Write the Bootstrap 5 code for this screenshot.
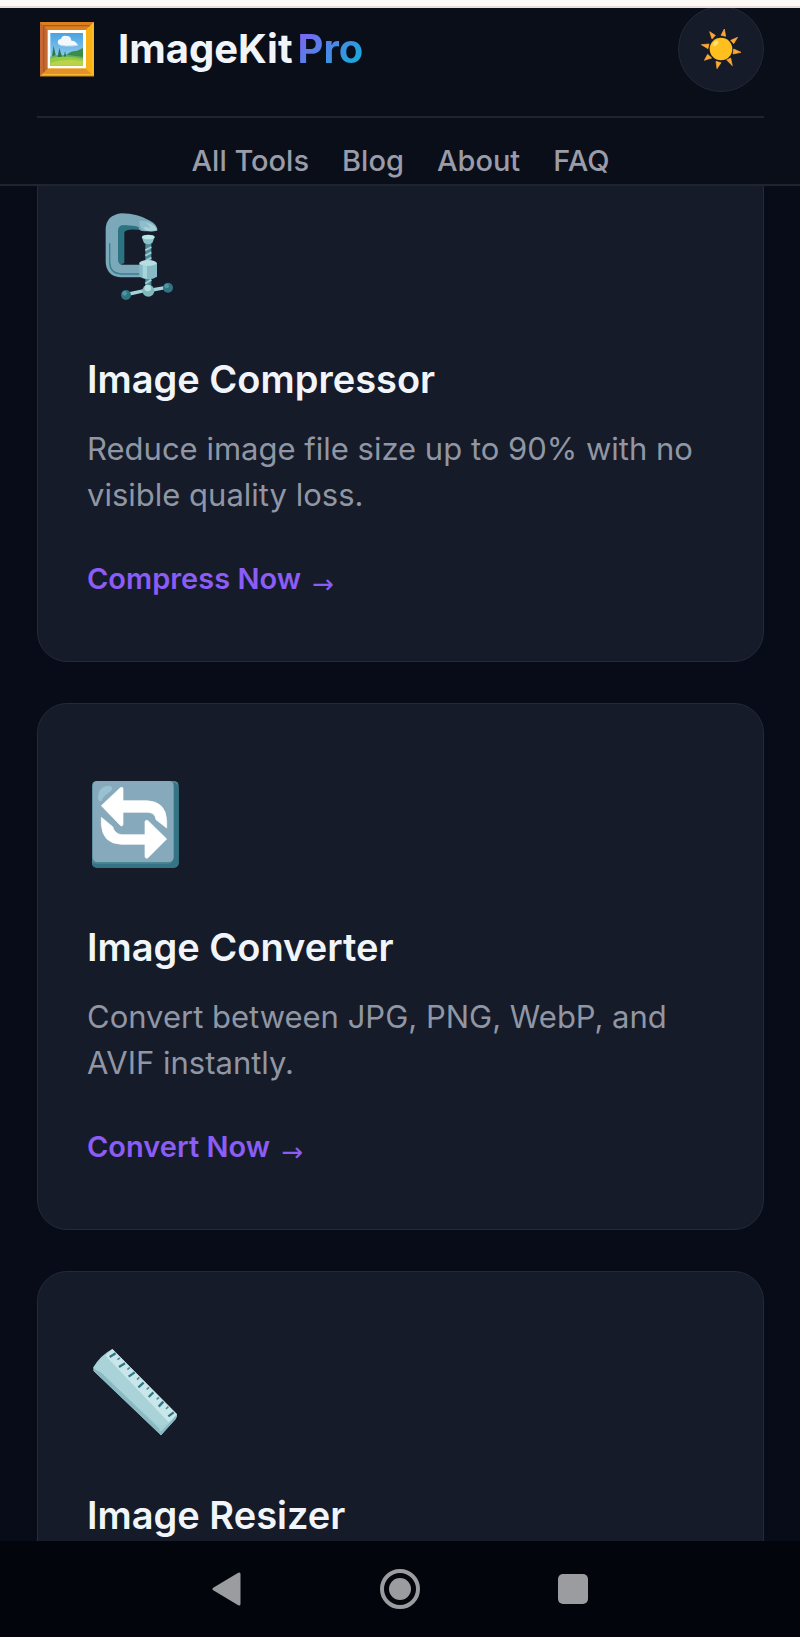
<!DOCTYPE html>
<html lang="en">
<head>
<meta charset="utf-8">
<meta name="viewport" content="width=device-width, initial-scale=1">
<title>ImageKit Pro</title>
<link href="https://cdn.jsdelivr.net/npm/bootstrap@5.3.0/dist/css/bootstrap.min.css" rel="stylesheet">
<style>
  body { background: #080c18; color: #f1f5f9; font-family: Inter, "Liberation Sans", sans-serif; }
  .screen { height: 100vh; }
  .status-strip { height: 8px; background: #fdf9f5; border-bottom: 2px solid #ecdcdd; z-index: 3; }
  .site-header { margin-top: -8px; padding-top: 6px; background: #0a0e19; border-bottom: 2px solid #1f2530; z-index: 2; }
  .gutter { padding-left: 37px; padding-right: 36px; }
  .brand-row { padding-bottom: 24px; border-bottom: 2px solid #1f2530; }
  .brand { gap: 21px; font-size: 40px; line-height: 48px; font-weight: 700; color: #f1f5f9; }
  .brand-pro { margin-left: 5px; background: linear-gradient(135deg, #8b5cf6, #06b6d4); -webkit-background-clip: text; background-clip: text; color: transparent; }
  .theme-toggle { width: 86px; height: 86px; background: #151b29; border: 1px solid #232938; }
  .site-nav { padding-top: 19px; gap: 33px; font-size: 29px; line-height: 47px; font-weight: 500; }
  .site-nav a { color: #9a9ca9; }
  .tools { gap: 41px; margin-top: -51px; }
  .tool { padding: 50px 49px 59px; background: #151b29; border: 1px solid #242a37; border-radius: 30px; }
  .tool-icon { height: 140px; margin-bottom: 28px; }
  .tool h2 { margin-bottom: 22px; font-size: 38px; line-height: 50px; font-weight: 600; }
  .tool p { margin-bottom: 38px; font-size: 31px; line-height: 46px; color: #9196a4; }
  .tool-link { font-size: 29px; line-height: 46px; font-weight: 600; color: #8b5cf6; }
  .arrow { margin-left: 4px; font-family: "DejaVu Sans", sans-serif; font-size: 26px; font-weight: 400; line-height: 1; vertical-align: -4px; }
  .system-bar { height: 96px; gap: 125px; background: #02050c; z-index: 2; }
  .system-bar button { width: 48px; height: 48px; color: #9b9c9f; }
</style>
</head>
<body>
<div class="screen d-flex flex-column overflow-hidden">
  <div class="status-strip position-relative flex-shrink-0"></div>
  <header class="site-header position-relative flex-shrink-0 gutter">
    <div class="brand-row d-flex align-items-center justify-content-between">
      <a href="#" class="brand d-flex align-items-center text-decoration-none">
        <svg width="60" height="60" viewBox="21 27 180 180" aria-hidden="true">
          <defs><linearGradient id="sky" x2="0" y2="1"><stop stop-color="#4aa3e0"/><stop offset="1" stop-color="#a5d9f2"/></linearGradient></defs>
          <path fill="#f4a51c" d="M30 36h162v163H30z"/>
          <path fill="#dc801f" d="M30 36h162l-25 24H54z"/>
          <path fill="#c56831" d="M30 36l24 24v116l-24 23z"/>
          <path fill="#e1922c" d="M30 199l24-23h114l24 23z"/>
          <path fill="#f9b116" d="M192 36v163l-24-23V60z"/>
          <path fill="none" stroke="#a85a2d" stroke-width="4" d="M41 187V47h139"/>
          <path fill="none" stroke="#ffc02b" stroke-width="3" d="M188 41v153H36"/>
          <path fill="#fff" d="M53 60h115v115H53z"/>
          <path fill="url(#sky)" d="M61 69h98v98H61z"/>
          <path fill="#67b258" d="M61 140q25-9 47-4l51-19v50H61z"/>
          <path fill="#3d8a4d" d="M109 135q14-13 30-12l20-9v27q-31-5-50-6z"/>
          <path fill="#94cb45" d="M61 145q42-12 98 2v20H61z"/>
          <path fill="#bad348" d="M61 158q52-15 98-4v13H61z"/>
          <path fill="#2b7548" d="M66 139l5-32 6 29zM83 141l5-27 8 26zM101 140l4-16 4 15z"/>
          <path fill="#f2f8fb" d="M85 103q-6-14 8-16 4-13 17-9 13-1 14 14 13-1 20 14-15 4-28 1-21 3-31-4z"/>
          <path fill="#c8dde8" d="M86 104q18 0 27 4 13-4 31-2-15 5-30 3-19 1-28-5z"/>
        </svg>
        <span>ImageKit<span class="brand-pro">Pro</span></span>
      </a>
      <button type="button" class="theme-toggle rounded-circle p-0 d-flex align-items-center justify-content-center" aria-label="Switch theme">
        <svg width="48" height="48" viewBox="78 75 144 144" aria-hidden="true">
          <g fill="#ffa733" stroke="#ffa733" stroke-width="2" stroke-linejoin="round">
            <path d="M160 87l4 22-14-3zM200 112l-12 19-9-10zM210 157l-24 5 2-15zM184 197l-17-17 12-6zM138 206l-3-22 15 4zM100 181l10-18 12 11zM91 134l23-2-3 14zM116 95l17 11-10 11z"/>
          </g>
          <circle cx="150" cy="147" r="34" fill="#ffbf1f"/>
          <ellipse cx="134" cy="130" rx="10" ry="6" fill="#ffe06c" transform="rotate(-45 134 130)"/>
        </svg>
      </button>
    </div>
    <nav class="site-nav d-flex justify-content-center">
      <a href="#" class="text-decoration-none">All Tools</a>
      <a href="#" class="text-decoration-none">Blog</a>
      <a href="#" class="text-decoration-none">About</a>
      <a href="#" class="text-decoration-none">FAQ</a>
    </nav>
  </header>

  <main class="flex-grow-1 gutter" style="min-height:0">
    <div class="tools d-flex flex-column">
      <article class="tool">
        <div class="tool-icon d-flex align-items-center">
          <svg width="96" height="96" viewBox="21 24 288 288" aria-hidden="true">
            <path fill="#2c7482" d="M112 76l77-2-2 17q-46-7-54 5v93l-21 8z"/>
            <path fill="#7ca9b9" d="M232 91q0-18-22-29Q174 41 125 40 78 45 77 88v99q3 42 44 45h60v-38h-52q-15 0-15-15V91q1-15 16-15 29-1 46 5 0 14 20 13z"/>
            <path fill="#9ccbd6" d="M178 63q42-5 53 28-22 8-41-1-13-7-12-27z" opacity=".6"/>
            <path fill="#b6dde3" d="M196 68q12 6 17 17-16-6-23-3 3 8 13 11 12 3 29-1-2-18-36-24z" opacity=".6"/>
            <path fill="none" stroke="#397f8e" stroke-width="4" stroke-linecap="round" d="M89 131v56q1 34 34 35h55"/>
            <path fill="#4e8996" d="M196 131h18v56h-18zM196 235h18v26h-18z"/>
            <path stroke="#9bcbd3" stroke-width="6" d="M196 151l18-10M196 167l18-10M196 183l18-10M196 251l18-12"/>
            <path fill="#8bc2c8" d="M185 111q19-11 39 0l-7 18q-12 8-25 0z"/>
            <ellipse cx="205" cy="111" rx="19" ry="7" fill="#b9e6e6"/>
            <path fill="#86bac5" d="M178 189q26-14 53 0v41q-24 15-53 0z"/>
            <path fill="#a5d4db" d="M188 195h13v41l-13-3z"/>
            <ellipse cx="204" cy="189" rx="26" ry="9" fill="#b7dce2"/>
            <path stroke="#a3d2d8" stroke-width="10" d="M147 282l46-10M216 270l39-7"/>
            <circle cx="205" cy="272" r="18" fill="#80b8bd"/>
            <circle cx="203" cy="264" r="10" fill="#b4dde0"/>
            <circle cx="138" cy="285" r="15" fill="#307381"/><circle cx="264" cy="263" r="15" fill="#307381"/>
            <circle cx="134" cy="280" r="7" fill="#4e96a3"/><circle cx="260" cy="258" r="7" fill="#4e96a3"/>
          </svg>
        </div>
        <h2>Image Compressor</h2>
        <p>Reduce image file size up to 90% with no visible quality loss.</p>
        <a href="#" class="tool-link d-block text-decoration-none">Compress Now <span class="arrow">→</span></a>
      </article>

      <article class="tool">
        <div class="tool-icon d-flex align-items-center">
          <svg width="96" height="96" viewBox="21 18 288 288" aria-hidden="true">
            <rect x="36" y="33" width="260" height="260" rx="14" fill="#4d8694"/>
            <path fill="#347484" d="M280 38q16 2 16 20v219q0 16-17 16H52q-16 0-16-14l16 2h210q18 0 18-18z"/>
            <rect x="38" y="33" width="243" height="243" rx="14" fill="#86aabb"/>
            <path fill="#a2cbdb" d="M54 86q0-39 35-39 18 6-4 22-18 12-20 24-8 4-11-7z" opacity=".7"/>
            <g fill="#fff" stroke="#fff" stroke-width="2" stroke-linejoin="round">
              <path d="M64 107l57-54q7-4 8 3v36h73q56 3 58 60v22l-32-25q-3-22-26-22h-73v36q-1 7-7 4z"/>
              <path d="M64 142l34 28q6 22 27 24h70v-39q2-7 9-3l56 55-56 56q-8 5-9-4v-36h-71q-57-2-60-60z"/>
            </g>
          </svg>
        </div>
        <h2>Image Converter</h2>
        <p>Convert between JPG, PNG, WebP, and AVIF instantly.</p>
        <a href="#" class="tool-link d-block text-decoration-none">Convert Now <span class="arrow">→</span></a>
      </article>

      <article class="tool">
        <div class="tool-icon d-flex align-items-center">
          <svg width="96" height="96" viewBox="21 27 288 288" aria-hidden="true">
            <path fill="#a5ced5" d="M40 97Q62 60 97 42l194 196q2 9-10 20l-38 43L41 108z"/>
            <path fill="#c9e7eb" d="M76 62l21-20 194 196-25 26z"/>
            <path fill="#a9d3d9" d="M76 62L40 97l24 20 166 150 20 6 16-11z"/>
            <path fill="#89b9c3" d="M40 100l25 14 180 174 46-48-4 13-44 48L41 108z"/>
            <path fill="#a4d0d4" d="M266 262l23-22-46 48-7-3z"/>
            <path stroke="#2e7887" stroke-width="7" d="M89 66l18-11M117 96l18-11M146 125l18-13M175 157l16-14M206 186l14-14M236 215l14-15M265 244l16-12"/>
            <path stroke="#4d8f99" stroke-width="5" d="M112 74l8-5M142 104l8-7M171 134l7-7M200 163l7-6M230 193l7-6M258 222l7-7"/>
          </svg>
        </div>
        <h2>Image Resizer</h2>
      </article>
    </div>
  </main>

  <div class="system-bar position-relative flex-shrink-0 d-flex align-items-center justify-content-center">
    <button type="button" class="btn p-0 border-0 d-flex" aria-label="Back">
      <svg width="48" height="48" viewBox="0 0 48 48" fill="currentColor" stroke="currentColor" stroke-width="3" stroke-linejoin="round"><path d="M36 9v30L11 24z"/></svg>
    </button>
    <button type="button" class="btn p-0 border-0 d-flex" aria-label="Home">
      <svg width="48" height="48" viewBox="0 0 48 48"><circle cx="24" cy="24" r="18" fill="none" stroke="currentColor" stroke-width="4"/><circle cx="24" cy="24" r="11" fill="currentColor"/></svg>
    </button>
    <button type="button" class="btn p-0 border-0 d-flex" aria-label="Recent apps">
      <svg width="48" height="48" viewBox="0 0 48 48" fill="currentColor"><rect x="9" y="9" width="30" height="30" rx="5"/></svg>
    </button>
  </div>
</div>
<script src="https://cdn.jsdelivr.net/npm/bootstrap@5.3.0/dist/js/bootstrap.bundle.min.js"></script>
</body>
</html>
